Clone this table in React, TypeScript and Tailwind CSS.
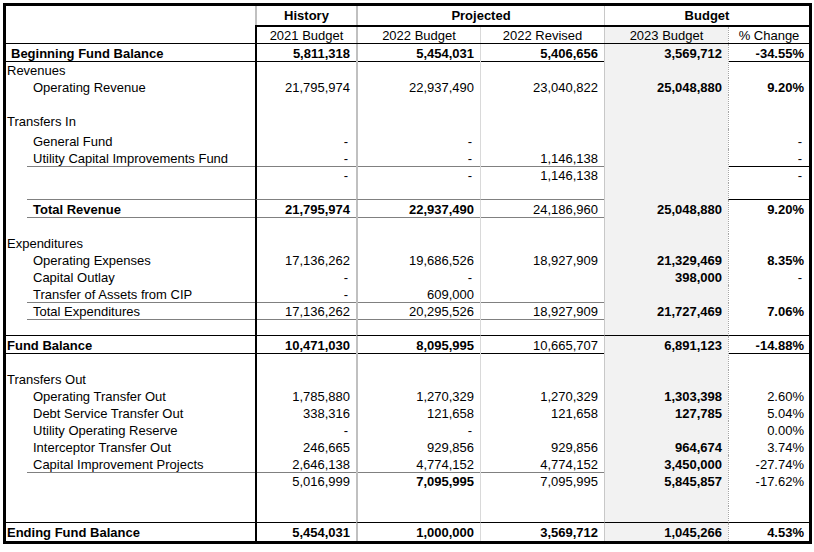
import React from 'react';

type Row = {
  label?: string;
  pad?: 0 | 1 | 2;
  bold?: boolean;
  v?: string[];
  h?: 17 | 18 | 20;
  line?: 'full' | 'sub' | 'subPct';
};

// "*" prefix = bold value
const rows: Row[] = [
  { label: 'Beginning Fund Balance', pad: 1, bold: true, v: ['*5,811,318', '*5,454,031', '*5,406,656', '*3,569,712', '*-34.55%'], line: 'full' },
  { label: 'Revenues' },
  { label: 'Operating Revenue', pad: 2, v: ['21,795,974', '22,937,490', '23,040,822', '*25,048,880', '*9.20%'] },
  {},
  { label: 'Transfers In' },
  { label: 'General Fund', pad: 2, h: 20, v: ['-', '-', '', '', '-'] },
  { label: 'Utility Capital Improvements Fund', pad: 2, v: ['-', '-', '1,146,138', '', '-'], line: 'subPct' },
  { pad: 2, v: ['-', '-', '1,146,138', '', '-'] },
  { pad: 2, line: 'subPct' },
  { label: 'Total Revenue', pad: 2, bold: true, v: ['*21,795,974', '*22,937,490', '24,186,960', '*25,048,880', '*9.20%'], line: 'sub' },
  {},
  { label: 'Expenditures' },
  { label: 'Operating Expenses', pad: 2, v: ['17,136,262', '19,686,526', '18,927,909', '*21,329,469', '*8.35%'] },
  { label: 'Capital Outlay', pad: 2, v: ['-', '-', '', '*398,000', '-'] },
  { label: 'Transfer of Assets from CIP', pad: 2, v: ['-', '609,000', '', '', ''], line: 'sub' },
  { label: 'Total Expenditures', pad: 2, v: ['17,136,262', '20,295,526', '18,927,909', '*21,727,469', '*7.06%'], line: 'sub' },
  { line: 'full' },
  { label: 'Fund Balance', bold: true, v: ['*10,471,030', '*8,095,995', '10,665,707', '*6,891,123', '*-14.88%'], line: 'full' },
  {},
  { label: 'Transfers Out' },
  { label: 'Operating Transfer Out', pad: 2, v: ['1,785,880', '1,270,329', '1,270,329', '*1,303,398', '2.60%'] },
  { label: 'Debt Service Transfer Out', pad: 2, v: ['338,316', '121,658', '121,658', '*127,785', '5.04%'] },
  { label: 'Utility Operating Reserve', pad: 2, v: ['-', '-', '', '', '0.00%'] },
  { label: 'Interceptor Transfer Out', pad: 2, v: ['246,665', '929,856', '929,856', '*964,674', '3.74%'] },
  { label: 'Capital Improvement Projects', pad: 2, v: ['2,646,138', '4,774,152', '4,774,152', '*3,450,000', '-27.74%'], line: 'sub' },
  { pad: 2, v: ['5,016,999', '*7,095,995', '7,095,995', '*5,845,857', '-17.62%'] },
  {},
  { line: 'full' },
  { label: 'Ending Fund Balance', bold: true, h: 18, v: ['*5,454,031', '*1,000,000', '*3,569,712', '*1,045,266', '*4.53%'] },
];

const colBorder = [
  'border-l-2 border-l-black',
  'border-l-2 border-l-[#c0c0c0]',
  'border-l border-l-[#d9d9d9]',
  'border-l border-l-[#c8c8c8] bg-[#f2f2f2]',
  'border-l border-l-[#a6a6a6] [border-left-style:dotted]',
];

const bottomLine = (line: Row['line'], i: number) => {
  if (line === 'full') return 'border-b border-b-black';
  if (line === 'sub' || line === 'subPct') {
    if (i < 3) return 'border-b border-b-[#808080]';
    if (i === 4 && line === 'subPct') return 'border-b border-b-black';
  }
  return '';
};

const BodyRow = ({ r }: { r: Row }) => {
  const height = r.h === 20 ? 'h-[20px]' : r.h === 18 ? 'h-[18px]' : 'h-[17px]';
  const align = r.h === 20 ? 'items-start pt-[5px]' : 'items-start pt-[2px]';
  const isSub = r.line === 'sub' || r.line === 'subPct';
  const pad = isSub ? 'pl-[6px]' : r.pad === 2 ? 'pl-[27px]' : r.pad === 1 ? 'pl-[5px]' : 'pl-px';
  const labelLine = r.line === 'full' ? 'border-b border-b-black' : isSub ? 'border-b border-b-[#808080]' : '';
  const vals = r.v ?? ['', '', '', '', ''];

  return (
    <div className={`grid grid-cols-[249px_101px_124px_124px_124px_81px] ${height}`}>
      <div className={`flex ${isSub ? 'pl-[21px]' : ''}`}>
        <div className={`flex flex-1 whitespace-nowrap ${align} ${pad} ${labelLine} ${r.bold ? 'font-bold' : ''}`}>
          {r.label}
        </div>
      </div>
      {vals.map((val, i) => {
        const bold = val.startsWith('*');
        const text = bold ? val.slice(1) : val;
        return (
          <div
            key={i}
            className={`flex justify-end whitespace-nowrap ${align} ${i === 4 ? 'pr-[5px]' : 'pr-[6px]'} ${colBorder[i]} ${bottomLine(r.line, i)} ${bold ? 'font-bold' : ''}`}
          >
            <span className={text === '-' ? 'mr-[2px]' : ''}>{text}</span>
          </div>
        );
      })}
    </div>
  );
};

const App = () => {
  return (
    <div className="min-h-screen bg-white p-[3px]">
      <div className="w-[809px] border-[3px] border-black text-[13px] leading-[15px] text-black font-['Liberation_Sans',Arial,sans-serif]">
        {/* header */}
        <div className="flex">
          <div className="w-[249px] h-[38px] border-b border-b-black" />
          <div className="flex flex-col w-[554px]">
            <div className="flex h-[21px] border-b-2 border-b-black font-bold">
              <div className="w-[101px] flex items-start pt-[2px] justify-center border-l-2 border-l-[#c0c0c0]">History</div>
              <div className="w-[248px] flex items-start pt-[2px] justify-center border-l-2 border-l-[#c0c0c0]">Projected</div>
              <div className="w-[205px] flex items-start pt-[2px] justify-center border-l border-l-[#c8c8c8]">Budget</div>
            </div>
            <div className="grid grid-cols-[101px_124px_124px_124px_81px] h-[17px] border-b border-b-black">
              {['2021 Budget', '2022 Budget', '2022 Revised', '2023 Budget', '% Change'].map((t, i) => (
                <div key={t} className={`flex items-start pt-px justify-center ${colBorder[i]}`}>
                  {t}
                </div>
              ))}
            </div>
          </div>
        </div>

        {rows.map((r, idx) => (
          <BodyRow key={idx} r={r} />
        ))}
      </div>
    </div>
  );
};

export default App;
